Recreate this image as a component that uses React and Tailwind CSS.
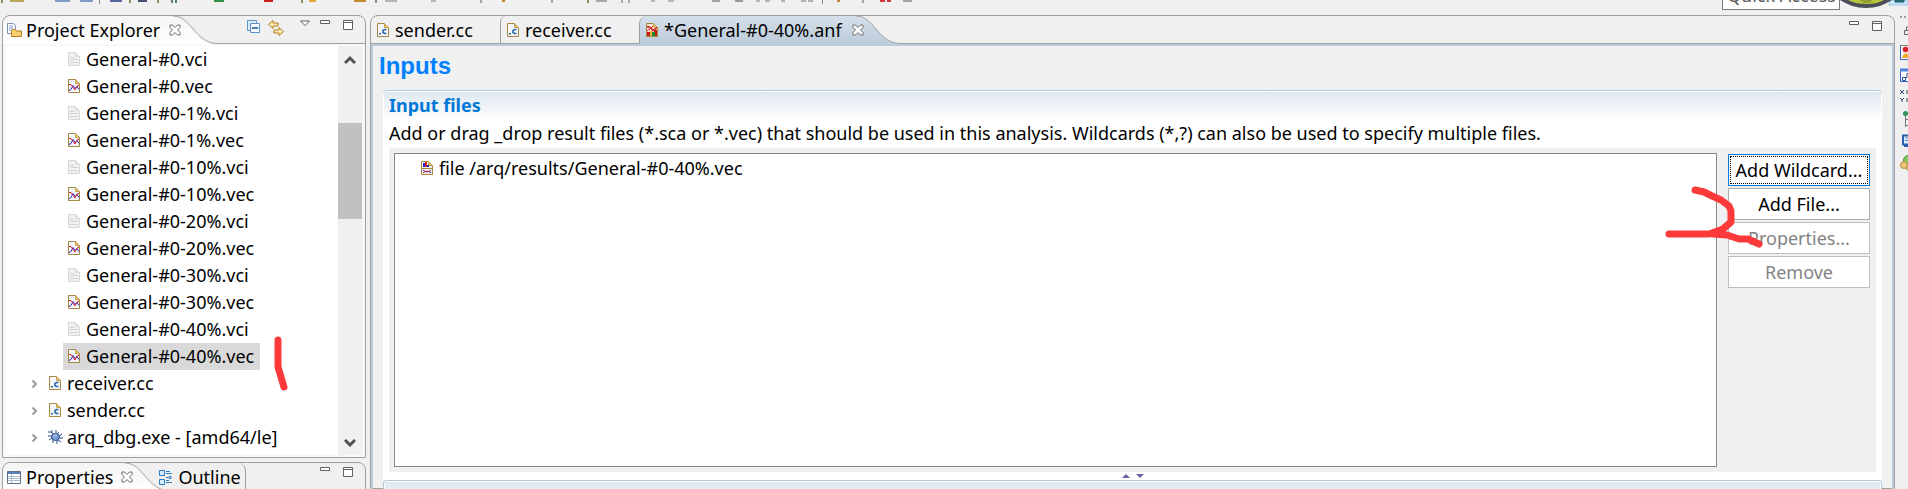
import { useState } from "react";

const treeItems = [
  { name: "General-#0.vci", type: "vci" },
  { name: "General-#0.vec", type: "vec" },
  { name: "General-#0-1%.vci", type: "vci" },
  { name: "General-#0-1%.vec", type: "vec" },
  { name: "General-#0-10%.vci", type: "vci" },
  { name: "General-#0-10%.vec", type: "vec" },
  { name: "General-#0-20%.vci", type: "vci" },
  { name: "General-#0-20%.vec", type: "vec" },
  { name: "General-#0-30%.vci", type: "vci" },
  { name: "General-#0-30%.vec", type: "vec" },
  { name: "General-#0-40%.vci", type: "vci" },
  { name: "General-#0-40%.vec", type: "vec" },
  { name: "receiver.cc", type: "cc" },
  { name: "sender.cc", type: "cc" },
  { name: "arq_dbg.exe - [amd64/le]", type: "exe" },
];

// x, width, colour of the toolbar icons that peek out at the top edge
const toolbarBits = [
  [1, 2, "#8b8b6b"], [10, 14, "#b9a75a"], [55, 15, "#7f9cc8"], [80, 13, "#7f9cc8"],
  [110, 12, "#56689c"], [129, 2, "#8b8b6b"], [138, 9, "#45506e"], [157, 2, "#8b8b6b"],
  [171, 2, "#4f7f74"], [175, 2, "#4f7f74"], [214, 10, "#2f9244"], [264, 9, "#c81e1e"],
  [301, 2, "#8b8b6b"], [309, 7, "#e0a63c"], [354, 12, "#c58a2c"], [375, 2, "#8b8b6b"],
  [385, 12, "#b5b5b5"], [431, 5, "#b5b5b5"], [480, 2, "#a5a5a5"], [502, 3, "#c08a30"],
  [551, 2, "#a5a5a5"], [587, 2, "#8b8b6b"], [596, 11, "#a8a8a8"], [621, 2, "#a8a8a8"],
  [628, 2, "#a8a8a8"], [651, 4, "#b5b5b5"], [668, 6, "#b5b5b5"], [712, 8, "#a5a5a5"],
  [735, 8, "#9a9a9a"], [756, 4, "#b5b5b5"], [765, 5, "#b5b5b5"], [781, 4, "#b5b5b5"],
  [801, 5, "#b0b0b0"], [808, 5, "#b0b0b0"], [837, 3, "#c08a30"], [862, 2, "#a5a5a5"],
  [880, 5, "#cf3a3f"], [887, 4, "#cf3a3f"], [903, 9, "#a5a5a5"],
];

function FileIcon({ type }) {
  if (type === "exe") {
    return (
      <svg className="w-4 h-4 shrink-0" viewBox="0 0 16 16" fill="none" stroke="#2c4a86">
        <path d="M1 3h3l2 2M5 1v3M9 1v3M12 3l-2 2M15 5l-3 2M16 9h-4M1 7h4M2 11l3-2M6 14v-3M10 15v-4M14 13l-3-2" />
        <ellipse cx="8.5" cy="8" rx="4" ry="3.5" fill="#7ba0dc" />
        <path d="M6 7l4-1" stroke="#c6d9f5" />
      </svg>
    );
  }
  const light = type === "vci";
  return (
    <svg className="w-3 h-4 shrink-0" viewBox="0 0 12 16" fill="none">
      <path
        d="M.5 1.5h7l4 4v9H.5z"
        fill={light ? "#f1f1f1" : "#f3f6fc"}
        stroke={light ? "#d6d6d6" : "#a5873f"}
      />
      <path d="M7.5 1.5v4h4z" fill={light ? "#e4e4e4" : "#e2c37a"} stroke={light ? "#dcdcdc" : "#c9a552"} />
      {light && <path d="M2 6.5h4M2 8.5h8M2 11.5h8" stroke="#d2d2d2" />}
      {type === "vec" && (
        <>
          <path d="M1 12.500l2-1 2-4 2 3 2-2 2 3" stroke="#2626c9" />
          <path d="M1 6.500h2l2 3 2 2.500 2-4 2-1" stroke="#d8202a" />
        </>
      )}
      {type === "cc" && (
        <>
          <path d="M9.500 7.500H7.500L6 8.500v2l1.500 1h2" stroke="#2d6aa5" strokeWidth="1.600" />
          <path d="M2 11h2v1.500H2z" fill="#2d6aa5" />
        </>
      )}
      {type === "anf" && (
        <>
          <path d="M1 2h6v3l4 2v7H1z" fill="#fbe3cf" />
          <path d="M1 4.500l3 1 3 3 4-3" stroke="#c81e1e" strokeWidth="1.500" />
          <path d="M1 9l3-2 3-3" stroke="#d8202a" />
          <path d="M1 10h3v4H1zM8 8h3v6H8z" fill="#c81e1e" />
          <path d="M4 9h2v5H4z" fill="#e8b830" />
          <path d="M6 10h3v4H6z" fill="#1f8a34" />
        </>
      )}
      {type === "result" && (
        <>
          <path d="M2 3h2v4H2z" fill="#2626c9" />
          <path d="M4 2h2v5H4z" fill="#d8202a" />
          <path d="M6 5h2v2H6z" fill="#2626c9" />
          <path d="M1 8.500h10" stroke="#a5873f" />
          <path d="M2 10l3 2 2-1 3 2" stroke="#2626c9" />
          <path d="M2 13l3-2 2 1 3-2" stroke="#d8202a" />
        </>
      )}
    </svg>
  );
}

function CloseIcon() {
  return (
    <svg className="w-3 h-3" viewBox="0 0 12 12" fill="#fff" stroke="#6b6b6b">
      <path d="M1 1h2.500L6 3.500 8.500 1H11v2.500L8.500 6 11 8.500V11H8.500L6 8.500 3.500 11H1V8.500L3.500 6 1 3.500z" />
    </svg>
  );
}

function WindowButtons() {
  return (
    <>
      <button aria-label="Minimize" className="flex">
        <svg className="w-[10px] h-[10px]" viewBox="0 0 10 10" fill="#fff" stroke="#606060">
          <path d="M.5.5h9v3h-9z" />
        </svg>
      </button>
      <button aria-label="Maximize" className="flex">
        <svg className="w-[10px] h-[10px]" viewBox="0 0 10 10" fill="#fff" stroke="#606060">
          <path d="M.5.5h9v9h-9zM.5 2.500h9" />
        </svg>
      </button>
    </>
  );
}

// Slanted right edge of the active tab
function TabCurve({ fill }) {
  return (
    <svg className="w-11 h-7 shrink-0" viewBox="0 0 44 28" fill="none">
      <defs>
        <linearGradient id={fill} x1="0" y1="0" x2="0" y2="1">
          <stop offset="0" stopColor={fill === "blueTab" ? "#d5e0ea" : "#f4f4f4"} />
          <stop offset="1" stopColor={fill === "blueTab" ? "#bccbda" : "#ffffff"} />
        </linearGradient>
      </defs>
      <path d="M0 0C9 0 14 6 20 13S33 27.500 44 27.500V28H0z" fill={`url(#${fill})`} />
      <path d="M0 0C9 0 14 6 20 13S33 27.500 44 27.500" stroke="#a0a0a0" />
    </svg>
  );
}

function Toolbar() {
  return (
    <div className="h-[15px] shrink-0 flex items-start">
      <svg className="w-[1000px] h-1" viewBox="0 0 1000 4">
        {toolbarBits.map(([x, w, color]) => (
          <rect key={x} x={x} y="0" width={w} height={w < 3 ? 3 : 2} fill={color} />
        ))}
        <path d="M99.500 0v4M822.500 0v4" stroke="#8a8a8a" />
      </svg>
      <input
        aria-label="Quick Access"
        placeholder="Quick Access"
        className="ml-auto -mt-5 h-[30px] w-[118px] shrink-0 bg-white border border-[#7a7a7a] px-1 text-[18px] placeholder:text-[#5c5c5c]"
      />
      <svg className="w-[68px] h-[10px] shrink-0" viewBox="0 0 68 10">
        <path d="M50 0h18v5H49z" fill="#cce4f7" stroke="#99c9ef" />
        <path d="M55 0h9v2h-9z" fill="#2d7f86" stroke="#1f5960" />
        <path d="M0 0C8 5 16 8 26 8S44 5 52 0z" fill="#4a4f57" />
        <path d="M8 0C14 3 20 4 27 4S38 3 44 0z" fill="#b6c43c" />
        <path d="M20 0h12M23 2h8" stroke="#6f7d24" />
      </svg>
    </div>
  );
}

function ProjectExplorer() {
  const [selected, setSelected] = useState("General-#0-40%.vec");

  return (
    <section className="border border-[#a0a0a0] rounded-t-lg shrink-0">
      <div className="h-7 flex items-stretch">
        <div className="flex items-center gap-1 pl-[3px] rounded-tl-lg bg-linear-to-b from-[#f4f4f4] to-white">
          <svg className="w-4 h-4" viewBox="0 0 16 16" fill="none">
            <path d="M1.500 1.500h6l2 2v8h-8z" fill="#fff" stroke="#7f8fb0" />
            <path d="M3 4h4M3 6h4M3 8h3" stroke="#7f9cc8" />
            <path d="M5.500 14.500v-6l1-1h3l1 1.500h5v5.500z" fill="#f6cf6f" stroke="#b57b1e" />
          </svg>
          <span className="whitespace-nowrap">Project Explorer</span>
          <button aria-label="Close Project Explorer" className="relative z-10 ml-[5px] -mr-2">
            <CloseIcon />
          </button>
        </div>
        <TabCurve fill="whiteTab" />
        <div className="flex-1 flex items-start justify-end gap-[13px] pt-1 pr-3 border-b border-[#a0a0a0]">
          <button aria-label="Collapse All">
            <svg className="w-[14px] h-[14px]" viewBox="0 0 14 14" fill="#dcebf7" stroke="#5b93c7">
              <path d="M.5.5h9v10h-9z" />
              <path d="M3.500 3.500h9v9h-9z" fill="#f4faff" />
              <path d="M5 8h6" stroke="#174f87" strokeWidth="1.500" />
            </svg>
          </button>
          <button aria-label="Link with Editor" className="-ml-[6px] mr-[3px]">
            <svg className="w-4 h-4" viewBox="0 0 16 16" fill="#fce9b4" stroke="#b97d1c">
              <path d="M5 .5L.5 4.500 5 8.500V6h5V3H5z" />
              <path d="M11 7.500l4.500 4-4.500 4V13H6V10h5z" />
            </svg>
          </button>
          <button aria-label="View Menu" className="flex mr-[-3px]">
            <svg className="w-[10px] h-[7px]" viewBox="0 0 10 7" fill="#fff" stroke="#606060">
              <path d="M.5 1h9L5 5.500z" />
            </svg>
          </button>
          <WindowButtons />
        </div>
      </div>

      <div className="flex pt-[2px] px-[2px] pb-[2px] bg-[#f8f8f8]">
        <ul className="flex-1 bg-white pb-1">
          {treeItems.map((item) => {
            const child = item.type === "vci" || item.type === "vec";
            return (
              <li key={item.name} className={`relative flex items-center h-[27px] ${child ? "pl-[58px]" : "pl-[26px]"}`}>
                {!child && (
                  <button aria-label={`Expand ${item.name}`} className="w-4">
                    <svg className="w-2 h-3" viewBox="0 0 8 12" fill="none" stroke="#9a9a9a" strokeWidth="2">
                      <path d="M1.500 2.500L5 6 1.500 9.500" />
                    </svg>
                  </button>
                )}
                <button
                  onClick={() => setSelected(item.name)}
                  className={`flex items-center h-full pb-[2px] whitespace-nowrap ${
                    item.type === "exe"
                      ? "gap-1 pr-1"
                      : child
                        ? "pl-[5px] pr-[6px] gap-[6px]"
                        : "pl-[2px] pr-1 gap-[6px]"
                  } ${selected === item.name ? "bg-[#d9d9d9]" : ""}`}
                >
                  <FileIcon type={item.type} />
                  {item.name}
                </button>
                {item.name === "General-#0-40%.vec" && (
                  <svg
                    className="absolute left-[268px] -top-2 w-5 h-[60px] z-10 pointer-events-none"
                    viewBox="0 0 20 60"
                    fill="none"
                    stroke="#fc3a3a"
                    strokeWidth="7"
                    strokeLinecap="round"
                    strokeLinejoin="round"
                  >
                    <path d="M5 5v27l6 20" />
                  </svg>
                )}
              </li>
            );
          })}
        </ul>
        <div className="w-6 bg-[#f0f0f0] flex flex-col items-center pt-[9px] pb-[6px] mr-[1px]">
          <svg className="w-3 h-3" viewBox="0 0 12 12" fill="none" stroke="#505050" strokeWidth="3">
            <path d="M1 8l5-5 5 5" />
          </svg>
          <div className="w-full h-24 mt-14 bg-[#c1c1c1]" />
          <svg className="w-3 h-3 mt-auto" viewBox="0 0 12 12" fill="none" stroke="#505050" strokeWidth="3">
            <path d="M1 3l5 5 5-5" />
          </svg>
        </div>
      </div>
    </section>
  );
}

function PropertiesPanel() {
  return (
    <section className="mt-1 h-12 shrink-0 border border-[#a0a0a0] rounded-t-lg flex">
      <div className="flex items-center h-7 gap-[5px] pl-1 rounded-tl-lg bg-linear-to-b from-[#f4f4f4] to-white">
        <svg className="w-[14px] h-[13px]" viewBox="0 0 14 13" fill="#fff" stroke="#5f7088">
          <path d="M.5.5h13v12H.5z" />
          <path d="M1 1h12v2H1z" fill="#5b7fb8" stroke="none" />
          <path d="M4.500 3v9M1 5.500h12M1 7.500h12M1 9.500h12" stroke="#a9b9d2" />
        </svg>
        <span>Properties</span>
        <button aria-label="Close Properties" className="relative z-10 ml-[3px] -mr-2">
          <CloseIcon />
        </button>
      </div>
      <TabCurve fill="whiteTab" />
      <button className="flex items-center gap-[5px] h-7 -ml-[10px] pr-1 border-r border-[#a0a0a0] rounded-tr-lg">
        <svg className="w-[14px] h-[15px]" viewBox="0 0 14 15" fill="#d5e9fa" stroke="#2f7cc0">
          <path d="M.5.5h5v5h-5zM.5 9.500h5v5h-5zM7 3.500h6M7 12.500h6M7 7.500h2M10 6.500h2v2h-2zM7 1.500h4M7 10.500h3" />
        </svg>
        Outline
      </button>
      <div className="flex-1 flex items-start justify-end gap-[13px] pt-1 pr-3">
        <WindowButtons />
      </div>
    </section>
  );
}

function Editor() {
  const button = "h-8 bg-white border whitespace-nowrap";

  return (
    <main className="flex-1 min-w-0 ml-1 border border-[#a0a0a0] rounded-t-lg flex flex-col">
      <div className="h-7 shrink-0 flex">
        <button className="w-[129px] flex items-center gap-[6px] pl-[6px] border-b border-[#a0a0a0]">
          <FileIcon type="cc" />
          sender.cc
        </button>
        <button className="w-[139px] flex items-center gap-[6px] pl-[6px] border-l border-b border-[#a0a0a0] rounded-tl-md">
          <FileIcon type="cc" />
          receiver.cc
        </button>
        <div className="flex items-center gap-[6px] pl-[6px] border-l border-[#a0a0a0] rounded-tl-lg bg-linear-to-b from-[#d5e0ea] to-[#bccbda]">
          <FileIcon type="anf" />
          <span className="whitespace-nowrap">*General-#0-40%.anf</span>
          <button aria-label="Close editor" className="relative z-10 ml-1 -mr-2">
            <CloseIcon />
          </button>
        </div>
        <TabCurve fill="blueTab" />
        <div className="flex-1 flex items-start justify-end gap-[13px] pt-[5px] pr-3 border-b border-[#a0a0a0]">
          <WindowButtons />
        </div>
      </div>

      <div className="flex-1 border-2 border-b-0 border-[#bccbda] pl-[10px] pr-[10px]">
        <h1 className="font-['Liberation_Sans',sans-serif] font-bold text-2xl leading-9 text-[#0080ff] pt-[2px] -ml-1 h-11">
          Inputs
        </h1>
        <section className="bg-white border-t border-[#b4c8dc] rounded-t-sm">
          <div className="bg-linear-to-b from-[#dfe8f0] to-white h-[29px] pl-[5px] mt-px mx-px">
            <h2 className="font-bold text-[18px] leading-[26px] text-[#0078d7]">Input files</h2>
          </div>
          <p className="pl-[6px] h-[27px] leading-6 whitespace-nowrap">
            Add or drag _drop result files (*.sca or *.vec) that should be used in this analysis. Wildcards (*,?) can also be
            used to specify multiple files.
          </p>
          <div className="mx-[6px] bg-[#f0f0f0] p-[5px] pr-[6px] flex gap-[11px]">
            <ul className="flex-1 h-[314px] bg-white border border-[#828790] pl-[26px]">
              <li className="flex items-center gap-[6px] h-[27px]">
                <FileIcon type="result" />
                file /arq/results/General-#0-40%.vec
              </li>
            </ul>
            <div className="relative w-[142px] flex flex-col gap-[2px] pt-px">
              <button className={`${button} border-[#0078d7] p-px`}>
                <span className="flex items-center justify-center h-full border border-dotted border-black">
                  Add Wildcard...
                </span>
              </button>
              <button className={`${button} border-[#adadad]`}>Add File...</button>
              <button disabled className={`${button} border-[#bfbfbf] text-[#838383]`}>Properties...</button>
              <button disabled className={`${button} border-[#bfbfbf] text-[#838383]`}>Remove</button>
              <svg
                className="absolute -left-16 top-8 w-[100px] h-[66px] pointer-events-none"
                viewBox="0 0 100 66"
                fill="none"
                stroke="#fc3a3a"
                strokeWidth="7"
                strokeLinecap="round"
                strokeLinejoin="round"
              >
                <path d="M31 5l9 2 8 4 9 4 8 6 2 5v11l-8 7-14 5H5" />
                <path d="M49 49l14 1 12 4h9l11 5" />
              </svg>
            </div>
          </div>
          <div className="h-2 flex items-center justify-center gap-[6px]">
            <svg className="w-2 h-1" viewBox="0 0 8 4" fill="#6464a0">
              <path d="M0 4l4-4 4 4z" />
            </svg>
            <svg className="w-2 h-1" viewBox="0 0 8 4" fill="#6464a0">
              <path d="M0 0l4 4 4-4z" />
            </svg>
          </div>
        </section>
        <section className="bg-white border border-b-0 border-[#b4c8dc] rounded-t-sm p-px">
          <div className="h-8 bg-linear-to-b from-[#dfe8f2] to-white pl-1">
            <h2 className="font-bold text-[18px] leading-[26px] text-[#0078d7]">Data</h2>
          </div>
        </section>
      </div>
    </main>
  );
}

function Perspectives() {
  return (
    <aside className="w-[13px] shrink-0 overflow-hidden pl-[5px]">
      <svg className="w-6 h-[160px]" viewBox="0 15 24 160" fill="none">
        <path d="M0 17h2M4 17h2M8 17h2" stroke="#a09c8c" strokeWidth="2" />
        <path d="M4.500 30.500h12v4h-12zM6.500 30v-3h6" stroke="#6b6259" />
        <path d="M.5 45.500h15v14H.5z" fill="#f5f5f5" stroke="#8d8a55" />
        <path d="M.5 45v15M0 59.500h16" stroke="#3a68b8" />
        <circle cx="5.500" cy="49.500" r="2.800" fill="#d8232a" />
        <path d="M2 58l1-3 3-2 3 2v3z" fill="#f0a92d" />
        <path d="M.5 69.500h15v12H.5z" fill="#fff" stroke="#2f67c4" />
        <path d="M0 70h16" stroke="#4a83dd" strokeWidth="3" />
        <path d="M2.500 77.500h3v3h-3zM5 77.500h2v-4h3" stroke="#2b5394" />
        <path d="M0 90l4 4M4 90l-4 4M6 91h4M6 93h4M0 98l2 2 2-2M2 100v2M6 99h4M6 101h4" stroke="#33486b" />
        <circle cx="5.500" cy="113.500" r="2.500" fill="#2f9456" />
        <path d="M5.500 116v11M6 119.500h6M6 125.500h6" stroke="#6e7480" />
        <path d="M3 135.500h13v9H3z" fill="#e5effc" stroke="#295fae" strokeWidth="2" />
        <path d="M5 138h5M5 140.500h5" stroke="#5a87c9" />
        <path d="M4 146h9" stroke="#295fae" strokeWidth="2" />
        <circle cx="8" cy="160" r="4.500" fill="#7bc95f" stroke="#4e9a3b" />
        <circle cx="4" cy="165" r="3.500" fill="#ecc67b" stroke="#b8873a" />
        <circle cx="9" cy="168" r="2.500" fill="#ecc67b" stroke="#b8873a" />
      </svg>
    </aside>
  );
}

function App() {
  return (
    <div className="h-screen overflow-hidden flex flex-col bg-[#f0f0f0] text-black text-[18px] leading-6 font-['Noto_Sans','Open_Sans',sans-serif]">
      <Toolbar />
      <div className="flex-1 flex min-h-0 pl-[2px]">
        <div className="w-[364px] shrink-0 flex flex-col">
          <ProjectExplorer />
          <PropertiesPanel />
        </div>
        <Editor />
        <Perspectives />
      </div>
    </div>
  );
}

export default App;
